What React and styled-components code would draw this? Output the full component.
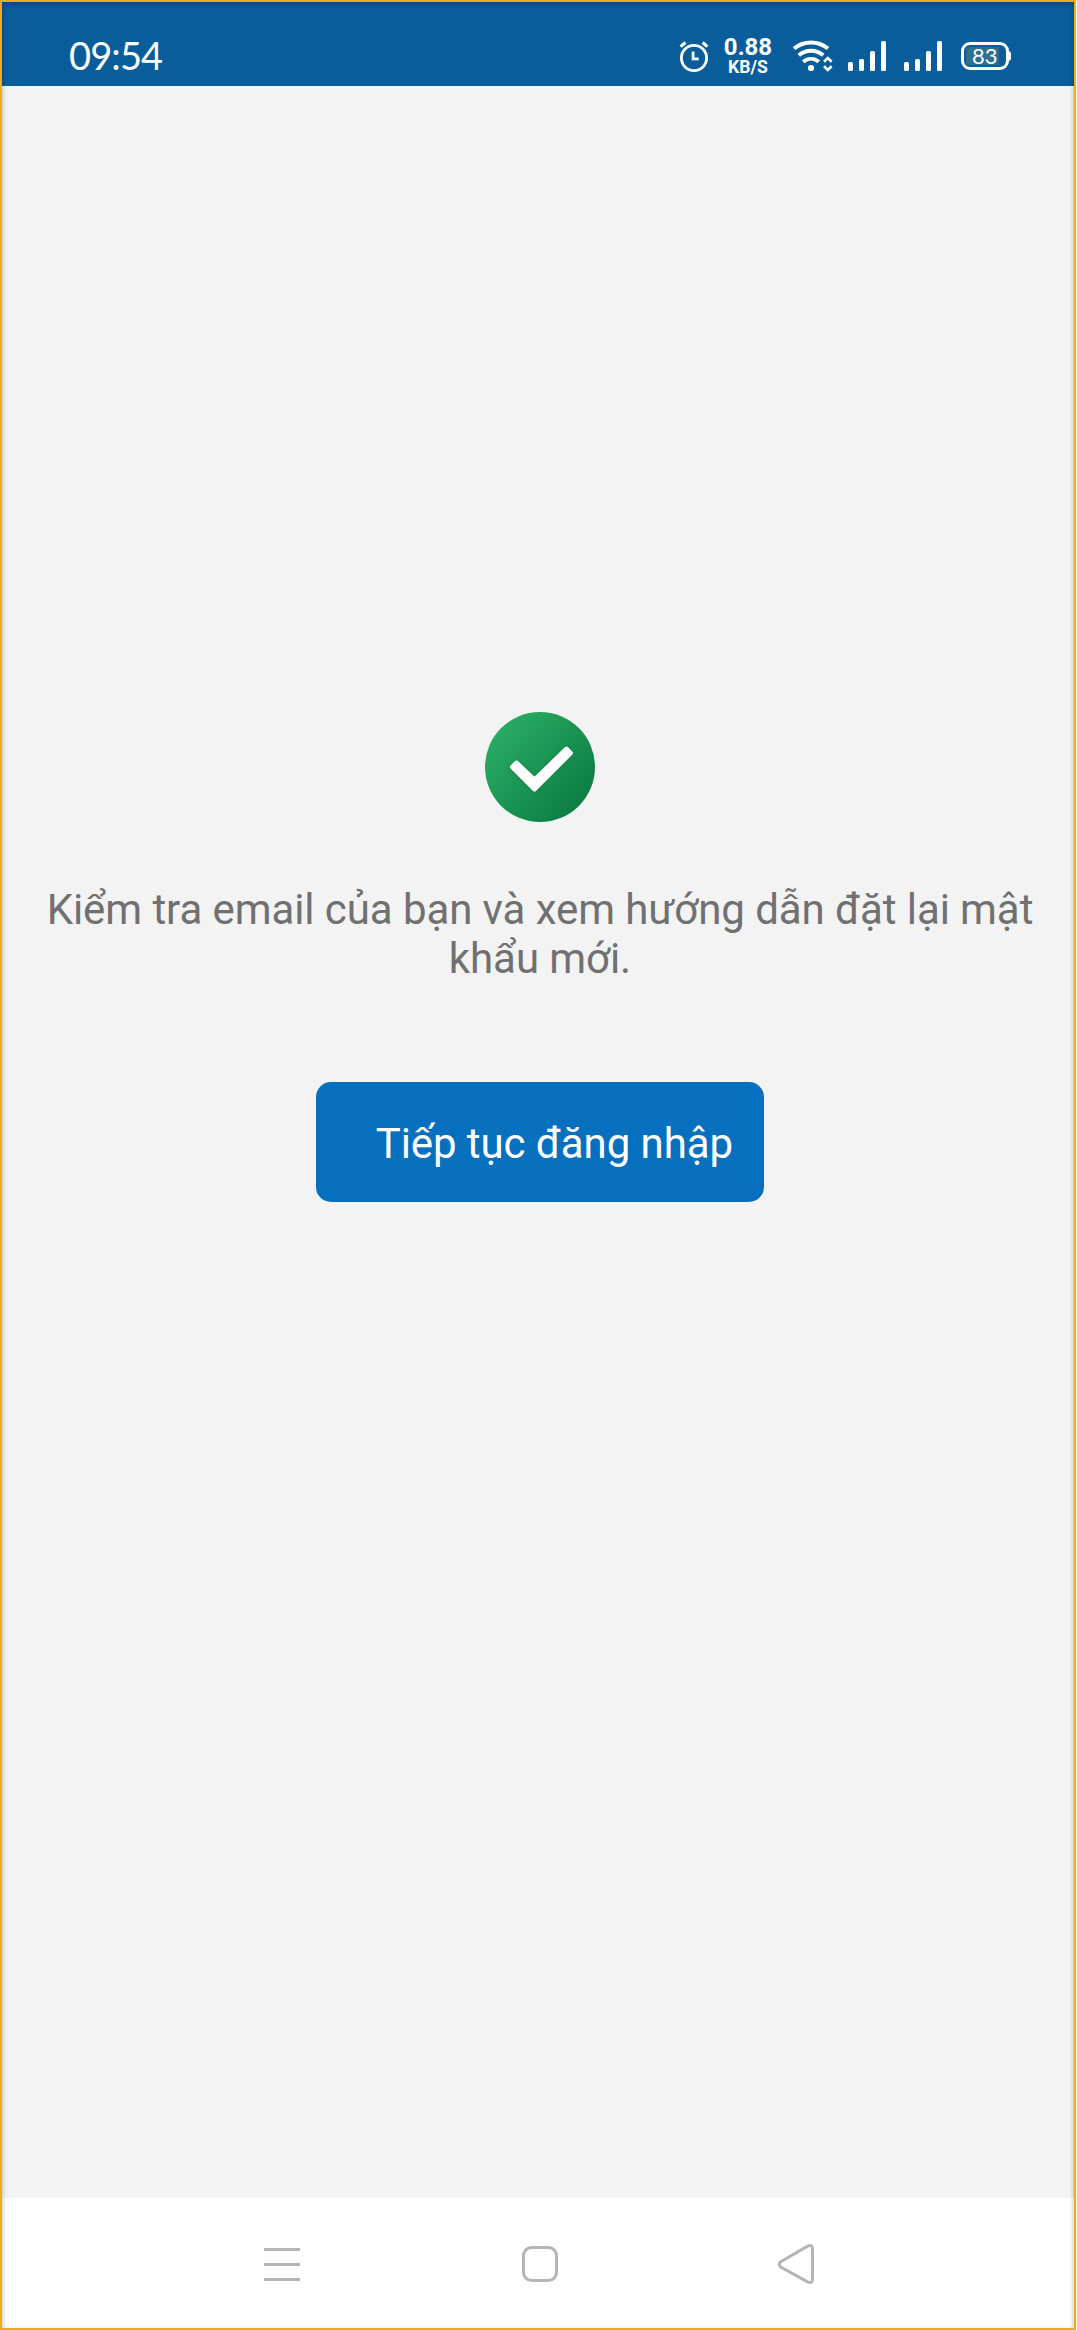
import React from "react";
import styled, { createGlobalStyle } from "styled-components";

const Global = createGlobalStyle`
  * { box-sizing: border-box; }
  body { margin: 0; background: #fff; }
`;

const Screen = styled.div`
  width: 1076px;
  height: 2330px;
  border: 2px solid #edae1c;
  display: flex;
  flex-direction: column;
  position: relative;
  background: #f3f3f3;
  font-family: Roboto, sans-serif;
  &::after {
    content: "";
    position: absolute;
    inset: 0;
    box-shadow: inset 0 2px 5px rgba(0, 0, 0, 0.3);
    pointer-events: none;
  }
`;

const StatusBar = styled.header`
  height: 84px;
  flex: none;
  display: flex;
  align-items: flex-start;
  justify-content: space-between;
  padding: 32px 65px 0 67px;
  background: #095d9b;
  color: #fff;
`;

const Clock = styled.time`
  font: 400 38px/42px Lato, sans-serif;
  letter-spacing: -0.9px;
`;

const StatusIcons = styled.div`
  display: flex;
  align-items: flex-start;
  padding-top: 2px;
`;

const Speed = styled.div`
  width: 48px;
  margin: 0 20px 0 14px;
  display: flex;
  flex-direction: column;
  align-items: center;
  font-weight: 700;
  white-space: nowrap;
`;

const SpeedValue = styled.span`
  font-size: 24px;
  line-height: 23px;
`;

const SpeedUnit = styled.span`
  font-size: 17.6px;
  line-height: 16px;
  letter-spacing: 0;
`;

const Bars = styled.div`
  height: 30px;
  margin-top: 5px;
  margin-right: ${(p) => p.$gap}px;
  display: flex;
  align-items: flex-end;
  gap: 6px;
`;

const Bar = styled.i`
  width: 5px;
  height: ${(p) => p.$h}px;
  border-radius: 1.5px;
  background: #fff;
`;

const Battery = styled.div`
  width: 48px;
  height: 28px;
  margin-top: 6px;
  padding: 2px;
  border: 3px solid #fff;
  border-radius: 9px;
  position: relative;
  &::after {
    content: "";
    position: absolute;
    right: -5px;
    top: 6px;
    width: 3px;
    height: 10px;
    border-radius: 0 3px 3px 0;
    background: #fff;
  }
`;

const BatteryLevel = styled.div`
  width: 33px;
  height: 18px;
  padding-left: 6px;
  border-radius: 3px 0 0 3px;
  background: #2f6f8e;
  font: 400 22px/17px Lato, sans-serif;
`;

const Main = styled.main`
  flex: 1;
  display: flex;
  flex-direction: column;
  align-items: center;
  padding: 626px 0 0 4px;
`;

const Message = styled.p`
  width: 1000px;
  margin: 63px 0 0;
  font-size: 42px;
  line-height: 49px;
  letter-spacing: -0.08px;
  text-align: center;
  color: #707070;
`;

const ContinueButton = styled.button`
  width: 448px;
  height: 120px;
  margin-top: 99px;
  padding: 2px 31px 0 0;
  border: 0;
  border-radius: 15px;
  background: #066fbe;
  color: #fff;
  font: 400 42px/49px Roboto, sans-serif;
  letter-spacing: -0.08px;
  text-align: right;
  white-space: nowrap;
`;

const NavBar = styled.nav`
  height: 130px;
  flex: none;
  display: flex;
  justify-content: center;
  align-items: center;
  gap: 218px;
  padding-left: 4px;
  background: #fff;
`;

const NavIcon = ({ children }) => (
  <svg width="40" height="44" viewBox="0 0 40 44" fill="none" stroke="#b5b5b5" strokeWidth="3">
    {children}
  </svg>
);

const Signal = ({ gap }) => (
  <Bars $gap={gap}>
    {[9, 12, 20, 30].map((h) => (
      <Bar key={h} $h={h} />
    ))}
  </Bars>
);

export default function App() {
  return (
    <>
      <Global />
      <Screen>
        <StatusBar>
          <Clock>09:54</Clock>
          <StatusIcons>
            <svg width="32" height="42" viewBox="678 36 32 42" fill="none" stroke="#fff">
              <circle cx="694" cy="58" r="12.6" strokeWidth="2.8" />
              <path d="M680.6 46.6l4.8-4.1M707.4 46.6l-4.8-4.1" strokeWidth="3.2" />
              <path d="M693.1 51.5v7.4h5.6" strokeWidth="2.8" />
            </svg>
            <Speed>
              <SpeedValue>0.88</SpeedValue>
              <SpeedUnit>KB/S</SpeedUnit>
            </Speed>
            <svg width="56" height="42" viewBox="792 36 56 42" fill="none" stroke="#fff">
              <path d="M794 48.5c10-8 24-8 34 0" strokeWidth="3.9" />
              <path d="M798.8 55.300c7.400-6 17-6 24.400 0" strokeWidth="3.9" />
              <path d="M803.200 61.800c4.700-3.900 10.900-3.900 15.600 0" strokeWidth="3.9" />
              <circle cx="811" cy="68" r="3.1" fill="#fff" stroke="none" />
              <path d="M824 61.700l3.800-3.600 3.800 3.600M824 66.300l3.800 3.600 3.800-3.600" strokeWidth="2.6" />
            </svg>
            <Signal gap={18} />
            <Signal gap={19} />
            <Battery>
              <BatteryLevel>83</BatteryLevel>
            </Battery>
          </StatusIcons>
        </StatusBar>
        <Main>
          <svg width="110" height="110" viewBox="0 0 110 110">
            <defs>
              <linearGradient id="disc" x1="0.1" y1="0.15" x2="0.9" y2="0.85">
                <stop offset="0" stopColor="#29ac63" />
                <stop offset="1" stopColor="#0b7d43" />
              </linearGradient>
              <filter id="soft" x="-20%" y="-20%" width="140%" height="140%">
                <feDropShadow dx="0" dy="0" stdDeviation="1.8" floodColor="#00542a" floodOpacity="0.5" />
              </filter>
            </defs>
            <circle cx="55" cy="55" r="55" fill="url(#disc)" />
            <path
              d="M31.500 50.500L49.500 67.500 81.500 36.500l4.500 4.600L49.500 77.500 27 55z"
              fill="#fff"
              stroke="#fff"
              strokeWidth="4"
              strokeLinejoin="round"
              filter="url(#soft)"
            />
          </svg>
          <Message>Kiểm tra email của bạn và xem hướng dẫn đặt lại mật khẩu mới.</Message>
          <ContinueButton type="button">Tiếp tục đăng nhập</ContinueButton>
        </Main>
        <NavBar>
          <NavIcon>
            <path d="M2 8.500h36M2 23.500h36M2 38.500h36" />
          </NavIcon>
          <NavIcon>
            <rect x="3.500" y="6.500" width="33" height="33" rx="8" />
          </NavIcon>
          <NavIcon>
            <path d="M2.700 20.700L29.600 5.200Q34.500 3 34.500 8V38Q34.500 43 29.600 40.800L2.700 26Q0 23.300 2.700 20.700z" />
          </NavIcon>
        </NavBar>
      </Screen>
    </>
  );
}
